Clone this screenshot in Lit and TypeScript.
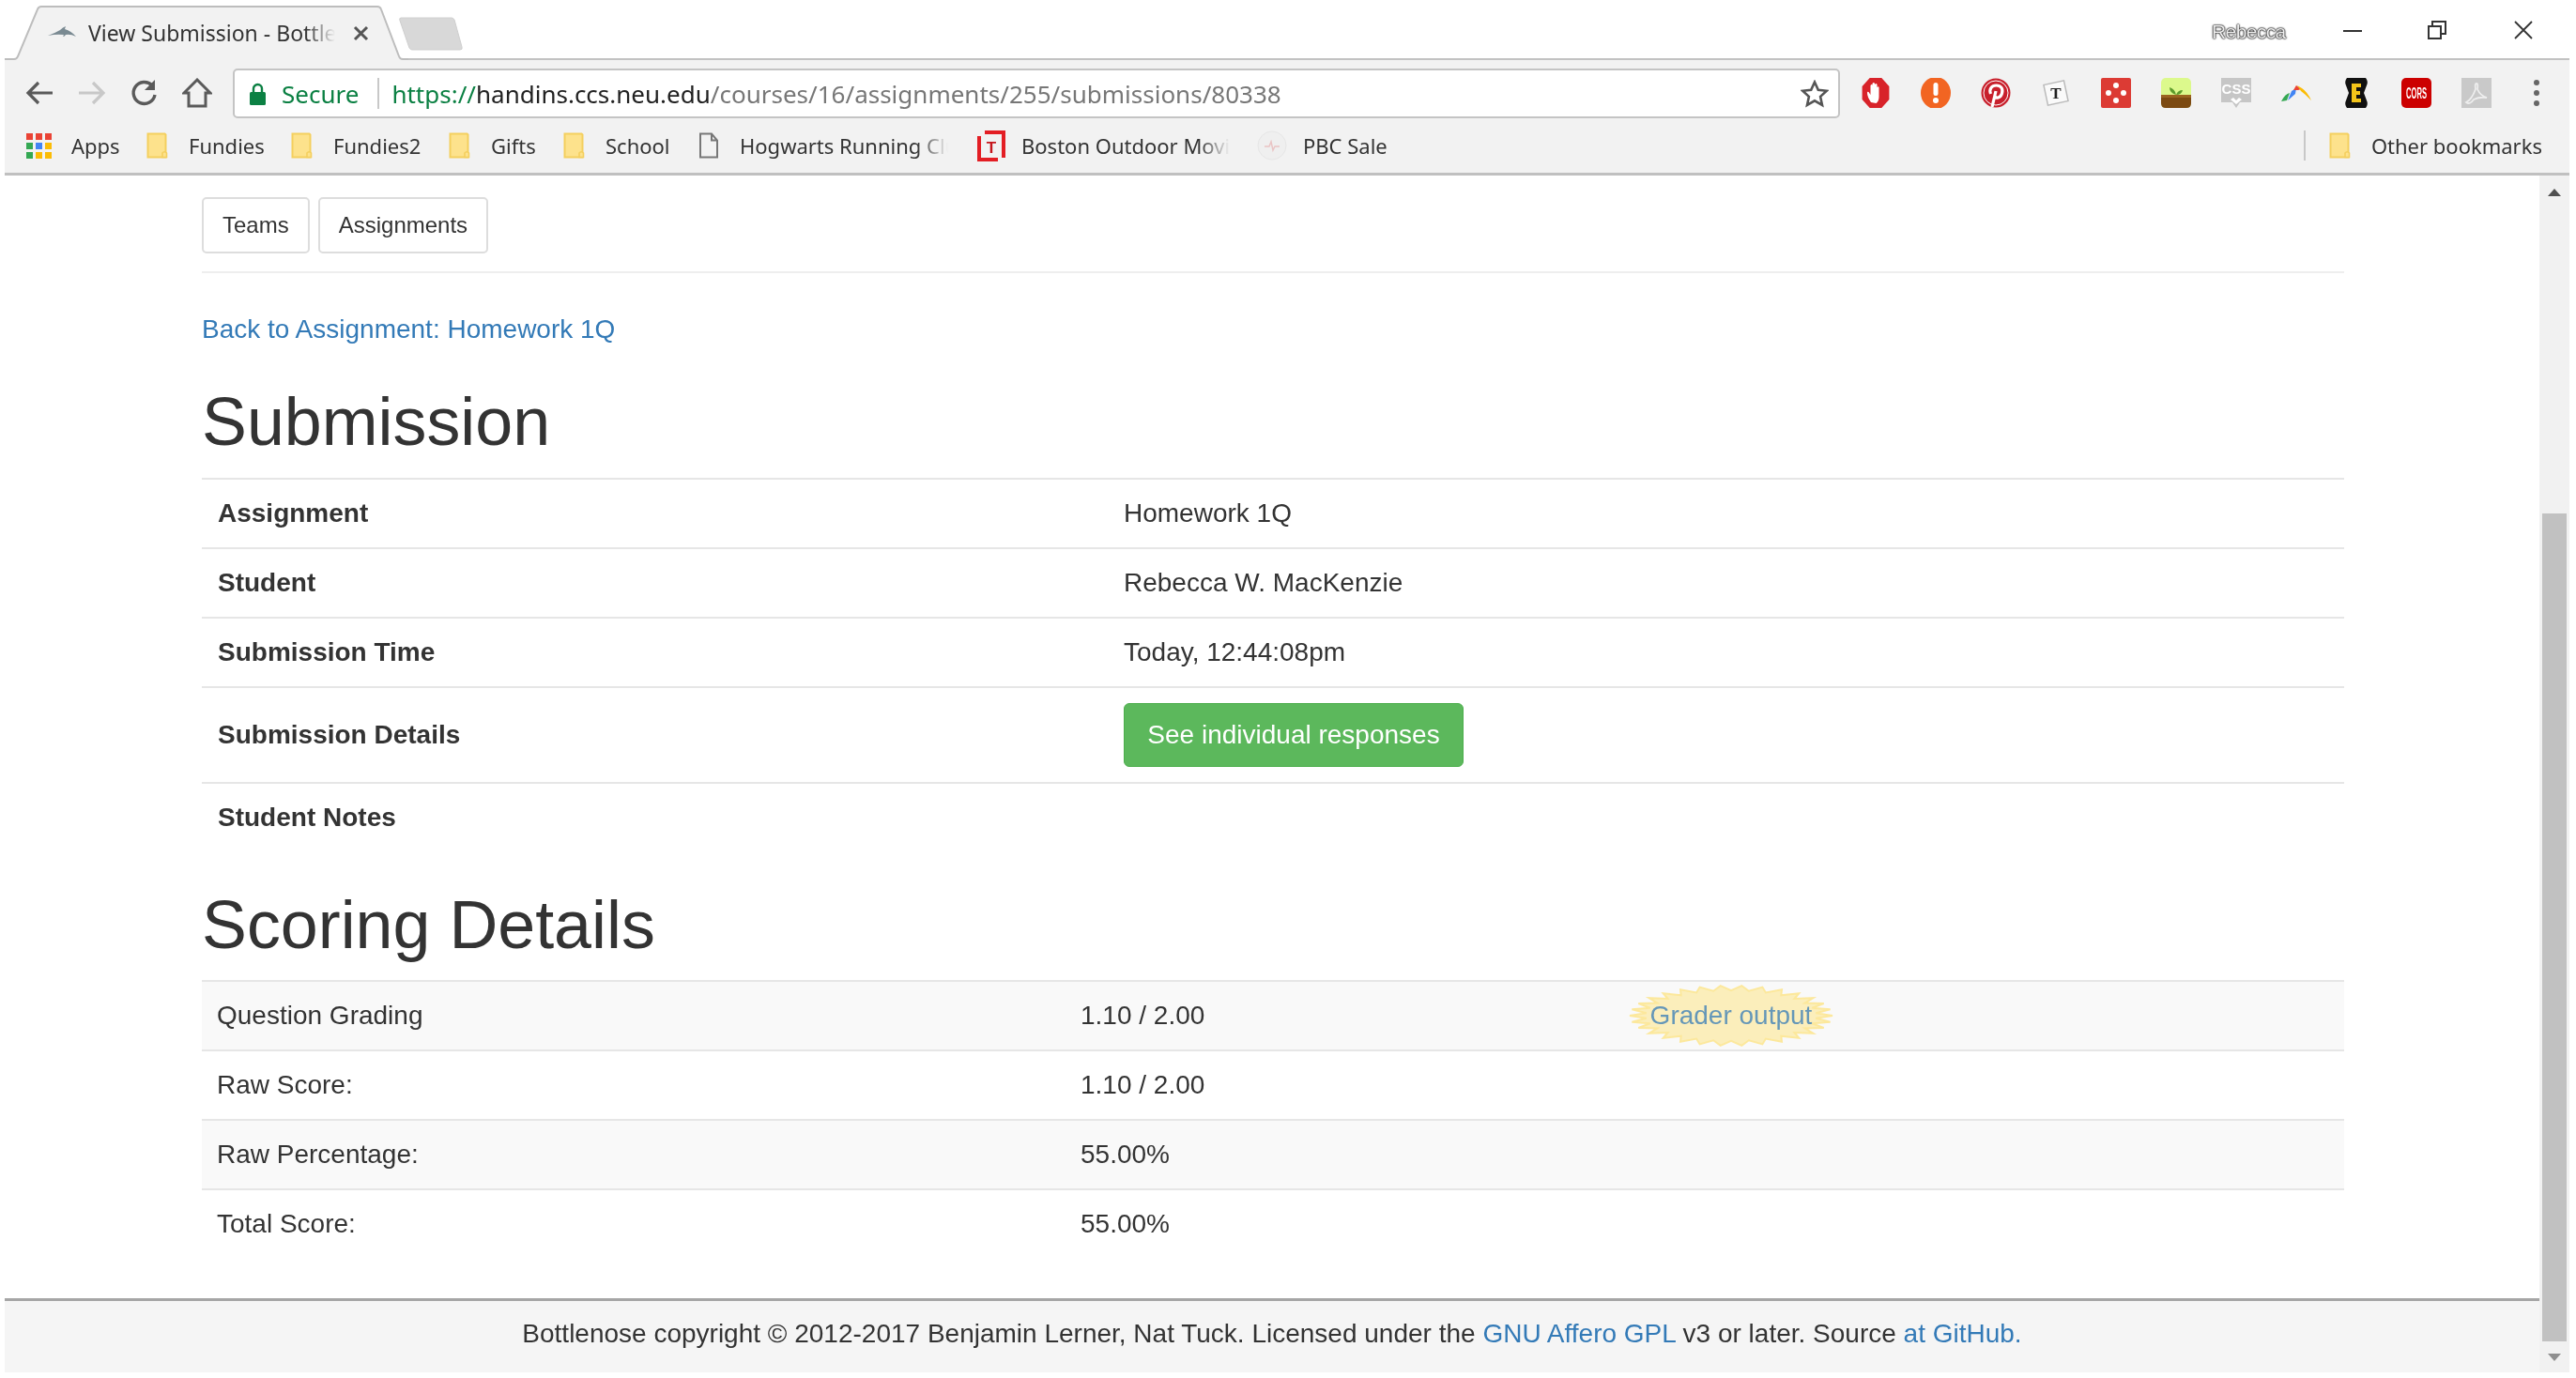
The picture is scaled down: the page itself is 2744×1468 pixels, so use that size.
import { LitElement, html, css, svg } from "lit";
import { customElement } from "lit/decorators.js";

const folder = svg`<svg class="bm-ico" viewBox="0 0 24 28"><path d="M1.5 1.5h18l1 1v24h-19z" fill="#fde28c" stroke="#f4cf5e" stroke-width="2"/><path d="M17 26.5v-4.5q2-2.5 4.5 0v4.5z" fill="#fde28c" stroke="#f4cf5e" stroke-width="1.6"/></svg>`;

const burstPoints = (() => {
  const a = 108, b = 32, n = 30, pts: string[] = [];
  for (let i = 0; i < n * 2; i++) {
    const t = (Math.PI * i) / n;
    const k = i % 2 ? 0.84 : 1;
    pts.push(`${(110 + a * k * Math.cos(t)).toFixed(1)},${(33 + b * k * Math.sin(t)).toFixed(1)}`);
  }
  return pts.join(" ");
})();

const extensions = [
  svg`<svg viewBox="0 0 32 32"><path d="M9 0h14l9 9v14l-9 9H9l-9-9V9z" fill="#d8232a" transform="matrix(.9 0 0 1 1.6 0)"/><path d="M11 26q-4-6-4-10 0-2 1.5-1l2 3V8q1.500-2 2 0v6-8q1.500-2 2.500 0v8-7q1.500-2 2.500 0v8-5q1.500-1.500 2 0v10q0 5-3 7z" fill="#fff"/></svg>`,
  svg`<svg viewBox="0 0 32 32"><ellipse cx="16" cy="16" rx="16" ry="17" fill="#f26522"/><rect x="13.500" y="5" width="5" height="14" rx="2.500" fill="#fff"/><circle cx="16" cy="24" r="3" fill="#fff"/></svg>`,
  svg`<svg viewBox="0 0 32 32"><circle cx="16" cy="16" r="15.500" fill="#c8202c"/><circle cx="16" cy="16" r="13" fill="none" stroke="#fff" stroke-width="1"/><path d="M12 31l4-17M10.500 17c-2-5 1-9 6-9s7.500 3.500 6 8.500-6.500 6-8 2.500" fill="none" stroke="#fff" stroke-width="3.200"/></svg>`,
  svg`<svg viewBox="0 0 32 32"><rect x="5" y="5" width="22" height="22" fill="#fafafa" stroke="#bbb" stroke-width="1.500" transform="rotate(-12 16 16)"/><text x="16" y="22" font-size="17" font-weight="700" font-family="Liberation Serif" text-anchor="middle" fill="#222">T</text></svg>`,
  svg`<svg viewBox="0 0 32 32"><rect width="32" height="32" rx="2" fill="#dc3b34"/><g fill="#fff"><circle cx="16" cy="8" r="3"/><circle cx="8" cy="16" r="3"/><circle cx="24" cy="16" r="3"/><circle cx="16" cy="24" r="3"/></g></svg>`,
  svg`<svg viewBox="0 0 32 32"><rect width="32" height="32" rx="5" fill="#dcf98c"/><path d="M0 18h32v9q0 5-5 5H5q-5 0-5-5z" fill="#7c4a12"/><path d="M0 18h32v3H0z" fill="#9a6420"/><path d="M16 18q-1-6-7-8 0 6 7 8zM16 18q2-5 7-5-1 5-7 5z" fill="#5d9c2c"/></svg>`,
  svg`<svg viewBox="0 0 32 32"><path d="M0 0h32v26H20l-4 6-4-6H0z" fill="#c6c6c6"/><text x="16" y="17" font-size="15" font-weight="700" font-family="Liberation Sans" text-anchor="middle" fill="#fff">CSS</text><path d="M10 23l3-2 3 3 3-3 3 2-6 5z" fill="#fff"/></svg>`,
  svg`<svg viewBox="0 0 32 32"><path d="M0 25q4-8 9-9l-3 8z" fill="#34a853"/><path d="M7 24l4-10 5-3-1 6z" fill="#4285f4"/><path d="M13 13l3-5 5 4-3 1z" fill="#ea4335"/><path d="M17 8l5 3q6 4 10 13-8-8-11-10z" fill="#fbbc05"/></svg>`,
  svg`<svg viewBox="0 0 32 32"><path d="M6 0h20q3 4 1 8l-3 8 3 8q2 4-1 8H6q-3-4-1-8l3-8-3-8q-2-4 1-8z" fill="#111"/><path d="M11 6h10v4h-5v4h4v4h-4v4h5v4H11z" fill="#f3c41a"/></svg>`,
  svg`<svg viewBox="0 0 32 32"><rect width="32" height="32" rx="5" fill="#cc0000"/><text x="16" y="22" font-size="16" font-weight="700" font-family="Liberation Sans" text-anchor="middle" fill="#fff" textLength="22" lengthAdjust="spacingAndGlyphs">CORS</text></svg>`,
  svg`<svg viewBox="0 0 32 32"><rect width="32" height="32" fill="#c9c9c9"/><path d="M5 26q6-3 10-14-1-6 1-6t1 6q3 7 10 9-8-1-14 2-4 6-8 3z" fill="none" stroke="#eee" stroke-width="1.800"/></svg>`,
];

@customElement("app-root")
export class AppRoot extends LitElement {
  static styles = css`
    :host { display: block; width: 2744px; height: 1468px; background: #fff; overflow: hidden; font-family: "Liberation Sans", Arial, sans-serif; color: #333; filter: blur(0.6px); }
    .frame { display: flex; flex-direction: column; width: 2732px; margin-left: 5px; height: 1462px; }
    .titlebar { height: 62px; flex: none; display: flex; align-items: flex-end; border-bottom: 2px solid #c2c2c2; background: #fff; }
    .tab { position: relative; width: 430px; height: 58px; margin-bottom: -2px; flex: none; font: 23px "Noto Sans", sans-serif; color: #333; }
    .tab svg.shape { position: absolute; left: 0; top: 0; width: 430px; height: 60px; }
    .tab-inner { position: relative; display: flex; align-items: center; height: 58px; padding-left: 46px; }
    .fav { width: 30px; height: 14px; flex: none; }
    .tab-title { margin-left: 13px; width: 263px; white-space: nowrap; overflow: hidden; -webkit-mask-image: linear-gradient(90deg, #000 88%, transparent); mask-image: linear-gradient(90deg, #000 88%, transparent); }
    .tab-x { width: 17px; height: 17px; margin-left: 19px; flex: none; }
    .newtab { width: 68px; height: 36px; margin-left: -10px; margin-bottom: 8px; flex: none; }
    .winctl { margin-left: auto; display: flex; align-items: center; height: 62px; padding-top: 2px; box-sizing: border-box; align-self: flex-start; }
    .who { font-size: 21px; color: #eee; letter-spacing: -0.6px; text-shadow: 0 0 2px #111, 0 0 2px #111, 0 0 1px #111; width: 81px; margin-top: 4px; }
    .winctl svg { width: 20px; height: 20px; flex: none; }
    .min { margin-left: 59px; }
    .rest { margin-left: 70px; }
    .cl { margin-left: 72px; margin-right: 39px; }

    .toolbar { height: 62px; flex: none; background: #f2f2f2; display: flex; align-items: flex-start; padding: 9px 0 0 21px; box-sizing: border-box; }
    .nav { display: flex; gap: 24px; padding-top: 10px; }
    .nav svg { width: 32px; height: 32px; display: block; }
    .omni { margin-left: 22px; width: 1712px; height: 53px; box-sizing: border-box; flex: none; background: #fff; border: 2px solid #c4c4c4; border-radius: 5px; display: flex; align-items: center; padding-left: 16px; font: 26px "Noto Sans", sans-serif; color: #777; white-space: nowrap; }
    .lock { width: 17px; height: 24px; flex: none; }
    .secure { color: #0b8043; margin-left: 17px; }
    .sep { width: 2px; height: 33px; background: #c8c8c8; margin: 0 13px 0 20px; flex: none; }
    .https { color: #0b8043; }
    .host-name { color: #222; }
    .star { width: 30px; height: 30px; margin-left: auto; margin-right: 10px; flex: none; }
    .exts { display: flex; gap: 32px; margin-left: 22px; padding-top: 10px; }
    .exts svg { width: 32px; height: 32px; display: block; }
    .dots { width: 32px; height: 32px; display: block; }

    .bookmarks { height: 58px; flex: none; background: #f2f2f2; border-bottom: 3px solid #c0c0c0; display: flex; align-items: center; padding-left: 23px; font: 22px "Noto Sans", sans-serif; color: #333; white-space: nowrap; }
    .bm { display: flex; align-items: center; flex: none; }
    .bm-ico { width: 24px; height: 28px; flex: none; display: block; }
    .bm span { margin-left: 21px; }
    .apps { width: 27px; height: 27px; flex: none; }
    .fade { overflow: hidden; -webkit-mask-image: linear-gradient(90deg, #000 85%, transparent); mask-image: linear-gradient(90deg, #000 85%, transparent); }
    .other { margin-left: auto; margin-right: 29px; display: flex; align-items: center; }
    .bdiv { width: 2px; height: 32px; background: #c8c8c8; margin-right: 25px; }

    .page { flex: 1; display: flex; min-height: 0; }
    .viewport { width: 2700px; flex: none; display: flex; flex-direction: column; }
    .main { flex: 1; padding: 0 208px 0 210px; }
    .navrow { display: flex; gap: 9px; padding: 23px 0 19px; border-bottom: 2px solid #eee; }
    .btn { height: 60px; box-sizing: border-box; border: 2px solid #ddd; border-radius: 5px; display: flex; align-items: center; padding: 0 20px; font-size: 24px; color: #333; }
    .back { margin-top: 40px; line-height: 40px; font-size: 28px; color: #337ab7; }
    h1 { margin: 0; font-weight: 400; font-size: 71.800px; line-height: 88px; color: #333; }
    .h-sub { margin-top: 34px; margin-bottom: 16px; }
    .h-score { margin-top: 34px; margin-bottom: 15px; }
    .row { display: grid; align-items: center; border-top: 2px solid #e6e6e6; box-sizing: border-box; font-size: 28px; height: 74px; }
    .r1 { grid-template-columns: 982px 1fr; }
    .r1 b { padding-left: 17px; }
    .row.tall { height: 102px; }
    .r2 { grid-template-columns: 936px 583px 1fr; }
    .r2 > span:first-child { padding-left: 16px; }
    .row.odd { background: #f9f9f9; }
    .green { width: 362px; height: 68px; box-sizing: border-box; border-radius: 6px; background: #5cb85c; border: 1px solid #4cae4c; color: #fff; display: flex; align-items: center; justify-content: center; font-size: 28px; }
    .burstwrap { position: relative; width: 220px; height: 66px; display: flex; align-items: center; justify-content: center; color: #337ab7; white-space: nowrap; }
    .burstwrap svg { position: absolute; left: 0; top: 0; width: 220px; height: 66px; }
    .burstwrap span { position: relative; opacity: .75; }
    .footer { height: 79px; flex: none; box-sizing: border-box; border-top: 3px solid #a6a6a6; background: #f5f5f5; display: flex; align-items: center; justify-content: center; font-size: 28px; padding-bottom: 6px; white-space: pre; }
    .footer a { color: #337ab7; white-space: pre; }
    .scroll { width: 32px; flex: none; background: #f1f1f1; display: flex; flex-direction: column; align-items: center; }
    .arrow { flex: none; width: 32px; height: 36px; display: flex; align-items: center; justify-content: center; }
    .arrow svg { width: 14px; height: 8px; }
    .spacer { height: 324px; flex: none; }
    .thumb { width: 26px; height: 882px; flex: none; background: #c1c1c1; }
  `;

  render() {
    const mark = (label: string, w?: number) => html`<div class="bm" style=${w ? `width:${w}px` : ""}>${folder}<span>${label}</span></div>`;
    return html`<div class="frame">
      <div class="titlebar">
        <div class="tab">
          <svg class="shape" viewBox="0 0 430 60"><path d="M0 57h10q3 0 4-3L35 4q1-3 4-3h358q3 0 4 3l19 50q1 3 4 3h6v3H0z" fill="#f2f2f2"/><path d="M0 57h10q3 0 4-3L35 4q1-3 4-3h358q3 0 4 3l19 50q1 3 4 3h6" fill="none" stroke="#bdbdbd" stroke-width="2"/></svg>
          <div class="tab-inner">
            <svg class="fav" viewBox="0 0 30 14"><path d="M0 10q8-3 13-6 3-3 6-4l-1 3q7 2 12 8-6-3-11-2-1 2-3 2l1-2q-8-1-17 1z" fill="#7a8a92"/></svg>
            <div class="tab-title">View Submission - Bottlenose</div>
            <svg class="tab-x" viewBox="0 0 17 17"><path d="M2 2l13 13M15 2L2 15" stroke="#555" stroke-width="3"/></svg>
          </div>
        </div>
        <svg class="newtab" viewBox="0 0 68 36"><path d="M2 1h54q2 0 3 2l8 29q1 3-2 3H14q-2 0-3-2L1 4q-1-3 1-3z" fill="#d8d8d8" stroke="#cfcfcf"/></svg>
        <div class="winctl">
          <div class="who">Rebecca</div>
          <svg class="min" viewBox="0 0 20 20"><path d="M0 11h20" stroke="#333" stroke-width="2"/></svg>
          <svg class="rest" viewBox="0 0 20 20"><path d="M1 6h13v13H1zM5 6V1h14v13h-5" fill="none" stroke="#333" stroke-width="2"/></svg>
          <svg class="cl" viewBox="0 0 20 20"><path d="M1 1l18 18M19 1L1 19" stroke="#333" stroke-width="1.800"/></svg>
        </div>
      </div>

      <div class="toolbar">
        <div class="nav">
          <svg viewBox="0 0 32 32"><path d="M30 16H5M15 5L4 16l11 11" fill="none" stroke="#5a5a5a" stroke-width="3.200"/></svg>
          <svg viewBox="0 0 32 32"><path d="M2 16h25M17 5l11 11-11 11" fill="none" stroke="#c8c8c8" stroke-width="3.200"/></svg>
          <svg viewBox="0 0 32 32"><path d="M27 18a11.500 11.500 0 1 1-3-10" fill="none" stroke="#5a5a5a" stroke-width="3.400"/><path d="M27 2v11H16z" fill="#5a5a5a"/></svg>
          <svg viewBox="0 0 32 32"><path d="M16 2L2 16h5v14h18V16h5z" fill="none" stroke="#5a5a5a" stroke-width="3"/></svg>
        </div>
        <div class="omni">
          <svg class="lock" viewBox="0 0 17 24"><path d="M4 11V6.500a4.500 4.500 0 0 1 9 0V11" fill="none" stroke="#0b8043" stroke-width="2.400"/><rect y="10" width="17" height="14" rx="1.500" fill="#0b8043"/></svg>
          <span class="secure">Secure</span><span class="sep"></span>
          <span><span class="https">https://</span><span class="host-name">handins.ccs.neu.edu</span>/courses/16/assignments/255/submissions/80338</span>
          <svg class="star" viewBox="0 0 30 30"><path d="M15 2.500l3.800 8.300 9 1-6.700 6.100 1.900 9-8-4.600-8 4.600 1.900-9-6.700-6.100 9-1z" fill="none" stroke="#555" stroke-width="2.600"/></svg>
        </div>
        <div class="exts">
          ${extensions}
          <svg class="dots" viewBox="0 0 32 32"><g fill="#666"><circle cx="16" cy="5" r="3"/><circle cx="16" cy="16" r="3"/><circle cx="16" cy="27" r="3"/></g></svg>
        </div>
      </div>

      <div class="bookmarks">
        <div class="bm" style="width:128px">
          <svg class="apps" viewBox="0 0 27 27">
            <g fill="#ea4335"><rect width="7" height="7"/><rect x="10" width="7" height="7"/><rect x="20" width="7" height="7"/></g>
            <rect y="10" width="7" height="7" fill="#34a853"/><rect x="10" y="10" width="7" height="7" fill="#4285f4"/><rect x="20" y="10" width="7" height="7" fill="#fbbc05"/>
            <rect y="20" width="7" height="7" fill="#34a853"/><rect x="10" y="20" width="7" height="7" fill="#fbbc05"/><rect x="20" y="20" width="7" height="7" fill="#fbbc05"/>
          </svg>
          <span>Apps</span>
        </div>
        ${mark("Fundies", 154)}${mark("Fundies2", 168)}${mark("Gifts", 122)}${mark("School", 143)}
        <div class="bm" style="width:298px">
          <svg class="bm-ico" viewBox="0 0 24 28"><path d="M3 1.500h12l6 7v18H3zM15 1.500v7h6" fill="none" stroke="#777" stroke-width="2"/></svg>
          <span class="fade" style="width:222px">Hogwarts Running Club</span>
        </div>
        <div class="bm" style="width:298px">
          <svg style="width:30px;height:33px;flex:none" viewBox="0 0 30 33"><path d="M8 2h20v27M22 31H2V6" fill="none" stroke="#e31e24" stroke-width="4"/><text x="15" y="24" font-size="17" font-weight="700" font-family="Liberation Sans" text-anchor="middle" fill="#c5161c">T</text></svg>
          <span class="fade" style="width:222px;margin-left:17px">Boston Outdoor Movies</span>
        </div>
        <div class="bm">
          <svg style="width:32px;height:32px;flex:none" viewBox="0 0 32 32"><circle cx="16" cy="16" r="15" fill="#efefef" stroke="#e6e6e6"/><path d="M8 17h5l2-5 2 9 2-4h5" fill="none" stroke="#eac4c4" stroke-width="1.500"/></svg>
          <span style="margin-left:17px">PBC Sale</span>
        </div>
        <div class="other"><div class="bdiv"></div>${folder}<span style="margin-left:21px">Other bookmarks</span></div>
      </div>

      <div class="page">
        <div class="viewport">
          <div class="main">
            <div class="navrow"><div class="btn">Teams</div><div class="btn">Assignments</div></div>
            <div class="back">Back to Assignment: Homework 1Q</div>
            <h1 class="h-sub">Submission</h1>
            <div class="row r1"><b>Assignment</b><span>Homework 1Q</span></div>
            <div class="row r1"><b>Student</b><span>Rebecca W. MacKenzie</span></div>
            <div class="row r1"><b>Submission Time</b><span>Today, 12:44:08pm</span></div>
            <div class="row r1 tall"><b>Submission Details</b><div class="green">See individual responses</div></div>
            <div class="row r1"><b>Student Notes</b><span></span></div>
            <h1 class="h-score">Scoring Details</h1>
            <div class="row r2 odd"><span>Question Grading</span><span>1.10 / 2.00</span>
              <div class="burstwrap"><svg viewBox="0 0 220 66"><polygon points=${burstPoints} fill="#fbeebb" stroke="#fce89c" stroke-width="2"/></svg><span>Grader output</span></div>
            </div>
            <div class="row r2"><span>Raw Score:</span><span>1.10 / 2.00</span><span></span></div>
            <div class="row r2 odd"><span>Raw Percentage:</span><span>55.00%</span><span></span></div>
            <div class="row r2"><span>Total Score:</span><span>55.00%</span><span></span></div>
          </div>
          <div class="footer"><span>Bottlenose copyright © 2012-2017 Benjamin Lerner, Nat Tuck. Licensed under the <a>GNU Affero GPL</a> v3 or later. Source <a>at GitHub.</a></span></div>
        </div>
        <div class="scroll">
          <div class="arrow"><svg viewBox="0 0 14 8"><path d="M7 0l7 8H0z" fill="#505050"/></svg></div>
          <div class="spacer"></div>
          <div class="thumb"></div>
          <div class="arrow" style="height:34px"><svg viewBox="0 0 14 8"><path d="M0 0h14L7 8z" fill="#8f8f8f"/></svg></div>
        </div>
      </div>
    </div>`;
  }
}
